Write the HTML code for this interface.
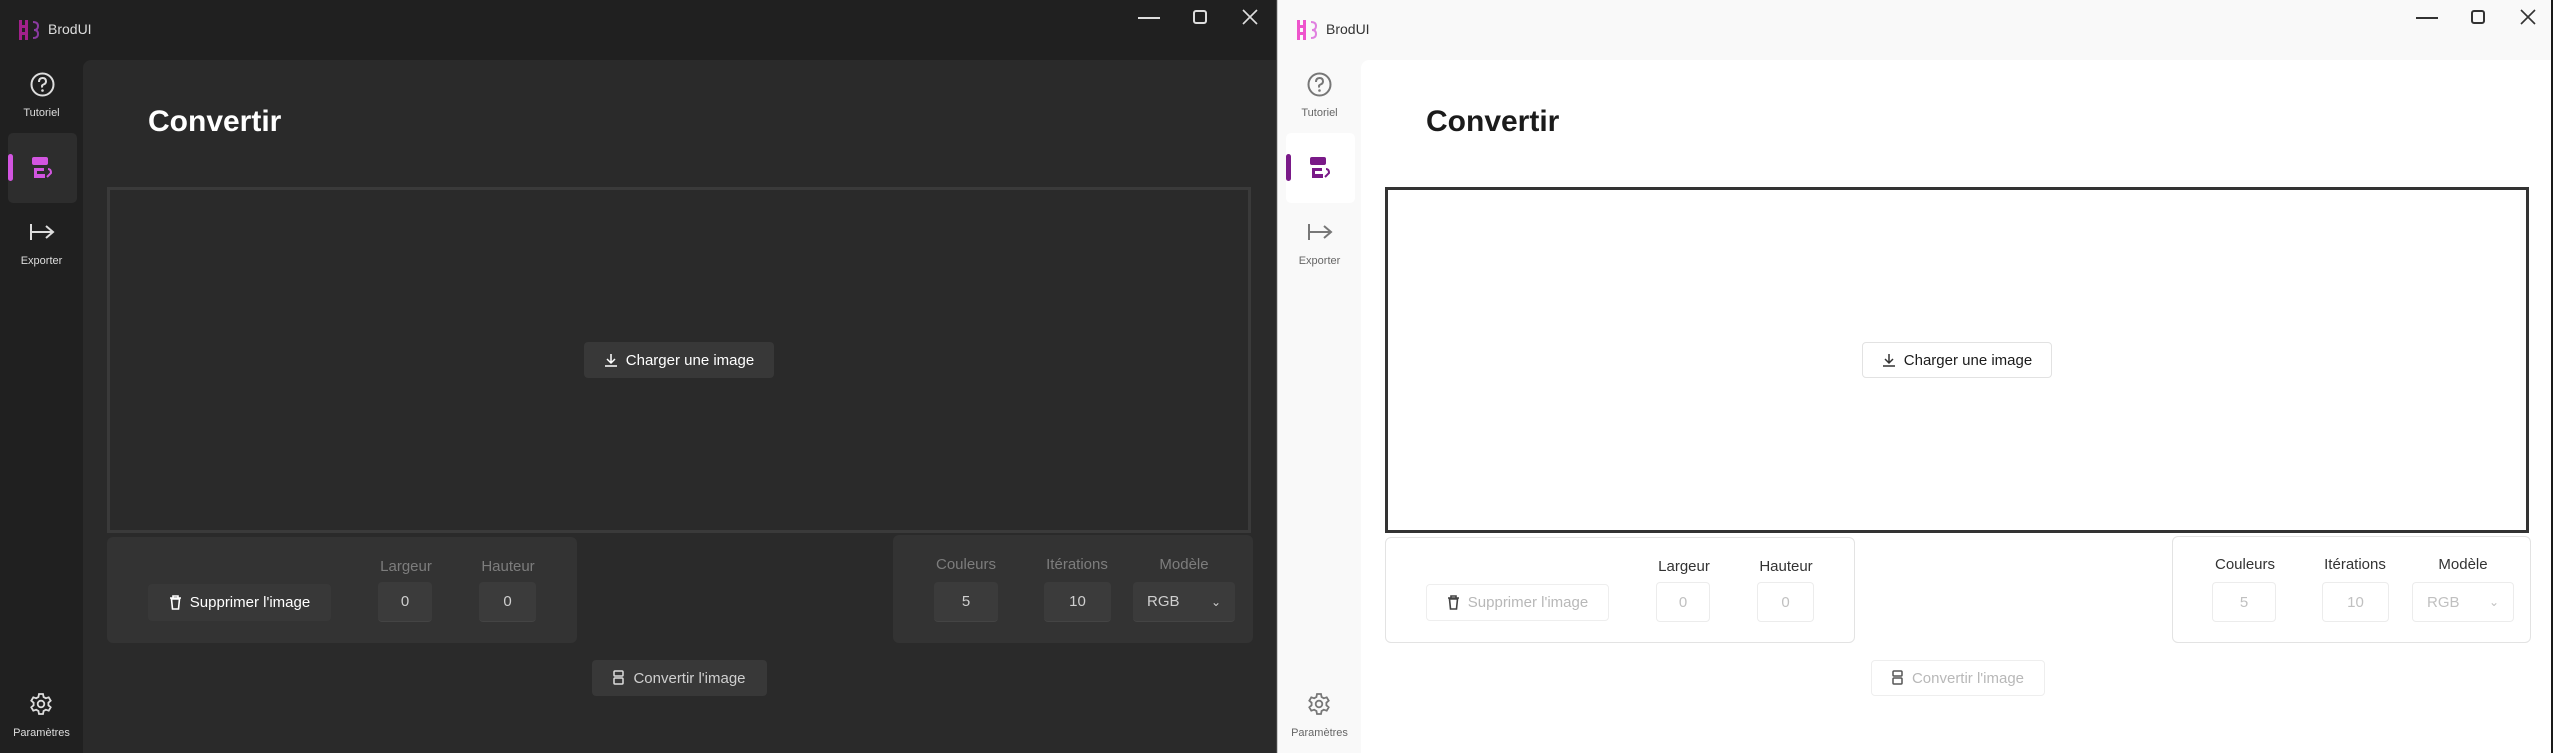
<!DOCTYPE html>
<html><head><meta charset="utf-8"><style>
*{box-sizing:border-box;margin:0;padding:0}
body{width:2553px;height:753px;position:relative;overflow:hidden;background:#1a1a1a;font-family:"Liberation Sans",sans-serif}
.win{position:absolute;top:0;height:753px;overflow:hidden}
.a{position:absolute;white-space:nowrap}
.d{background:#202020;color:#fff}
.l{background:#f9f9f9;color:#1b1b1b}
.content{left:83px;top:60px;right:0;bottom:0;border-top-left-radius:8px}
.d .content{background:#2a2a2a}
.l .content{background:#fff}
.title{left:48px;top:21px;font-size:14px}
.navlbl{width:83px;left:0;text-align:center;font-size:11px}
.h1{left:148px;top:105px;font-size:30px;font-weight:bold}
.dz{left:107px;top:187px;width:1144px;height:346px}
.d .dz{border:3px solid #3a3a3a}
.l .dz{border:3px solid #333}
.btn{border-radius:4px;font-size:15px;display:flex;align-items:center;justify-content:center;gap:8px}
.d .btn{background:#383838;color:#fff}
.l .btn{background:#fff;border:1px solid #e2e2e2;color:#1b1b1b}
.d .btn.dis{color:#cfcfcf}
.l .btn.dis{color:#b8b8b8;border-color:#eee}
.panel{border-radius:6px}
.d .panel{background:#333}
.l .panel{background:#fff;border:1px solid #e3e3e3}
.lbl{font-size:15px;text-align:center;width:120px}
.d .lbl{color:#7d7d7d}
.l .lbl{color:#333}
.inp{border-radius:4px;font-size:15px;display:flex;align-items:center;justify-content:center;height:40px;top:582px}
.d .inp{background:#3b3b3b;color:#cfcfcf;border-bottom:1px solid #444}
.l .inp{background:#fff;border:1px solid #ececec;color:#c0c0c0}
</style></head><body>

<!-- DARK WINDOW -->
<div class="win d" style="left:0;width:1277px;border-right:1px solid #444">
 <svg class="a" style="left:18px;top:19px" width="24" height="22" viewBox="0 0 24 22"><g fill="#a0208a"><rect x="1" y="1" width="3" height="20"/><rect x="7" y="1" width="3" height="20"/><rect x="1" y="6" width="9" height="3"/><rect x="1" y="13" width="9" height="3"/></g><path d="M15 3q5 0 5 4t-4 4q4 0 4 4t-5 4" stroke="#8a3aa0" stroke-width="2" fill="none"/></svg>
 <div class="a title" style="color:#ddd">BrodUI</div>
 <div class="a" style="left:1138px;width:22px;height:2px;top:17px;background:#ddd"></div>
 <div class="a" style="left:1193px;top:10px;width:14px;height:14px;border:2px solid #ddd;border-radius:3px"></div>
 <svg class="a" style="left:1242px;top:9px" width="16" height="16"><path d="M1 1L15 15M15 1L1 15" stroke="#ddd" stroke-width="1.6"/></svg>
 <svg class="a" style="left:30px;top:72px" width="25" height="25"><circle cx="12.5" cy="12.5" r="11" stroke="#ddd" stroke-width="2" fill="none"/><path d="M9 10q0-4 3.5-4t3.5 3.5q0 2-2.5 3t-1 3" stroke="#ddd" stroke-width="2" fill="none"/><circle cx="12.5" cy="18.5" r="1.3" fill="#ddd"/></svg>
 <div class="a navlbl" style="top:107px;color:#ddd">Tutoriel</div>
 <div class="a" style="left:8px;top:133px;width:69px;height:70px;background:#2d2d2d;border-radius:5px"></div>
 <div class="a" style="left:8px;top:154px;width:5px;height:27px;background:#d255e0;border-radius:3px"></div>
 <svg class="a" style="left:32px;top:157px" width="22" height="22"><rect x="0" y="0" width="16" height="8" rx="2" fill="#d255e0"/><path d="M2 11h10v3H5v3h8v4H2z" fill="#d255e0"/><path d="M16 12q3 0 3 4l-4 4" stroke="#d255e0" stroke-width="2" fill="none"/></svg>
 <svg class="a" style="left:29px;top:222px" width="26" height="20"><path d="M2 2v16M2 10h22M17 4l7 6-7 6" stroke="#ddd" stroke-width="2" fill="none"/></svg>
 <div class="a navlbl" style="top:255px;color:#ddd">Exporter</div>
 <svg class="a" style="left:29px;top:692px" width="24" height="24" viewBox="0 0 24 24"><path d="M10 2h4l.6 3 2.2 1.3 2.9-1 2 3.4-2.3 2v2.6l2.3 2-2 3.4-2.9-1-2.2 1.3-.6 3h-4l-.6-3-2.2-1.3-2.9 1-2-3.4 2.3-2v-2.6l-2.3-2 2-3.4 2.9 1L9.4 5z" stroke="#ddd" stroke-width="1.8" fill="none"/><circle cx="12" cy="12" r="3.3" stroke="#ddd" stroke-width="1.8" fill="none"/></svg>
 <div class="a navlbl" style="top:727px;color:#ddd">Paramètres</div>
 <div class="a content"></div>
 <div class="a h1">Convertir</div>
 <div class="a dz"></div>
 <div class="a btn" style="left:584px;top:342px;width:190px;height:36px">
  <svg width="14" height="14"><path d="M7 1v9M3 6l4 4 4-4M1 13h12" stroke="#fff" stroke-width="1.5" fill="none"/></svg>Charger une image</div>
 <div class="a panel" style="left:107px;top:537px;width:470px;height:106px"></div>
 <div class="a btn" style="left:148px;top:584px;width:183px;height:37px">
  <svg width="13" height="15"><path d="M1 3h11M4 3V1h5v2M2.5 4l1 10h6l1-10z" stroke="#fff" stroke-width="1.6" fill="none"/></svg>Supprimer l'image</div>
 <div class="a lbl" style="left:346px;top:558px">Largeur</div>
 <div class="a lbl" style="left:448px;top:558px">Hauteur</div>
 <div class="a inp" style="left:378px;width:54px">0</div>
 <div class="a inp" style="left:479px;width:57px">0</div>
 <div class="a panel" style="left:893px;top:535px;width:360px;height:108px"></div>
 <div class="a lbl" style="left:906px;top:556px">Couleurs</div>
 <div class="a lbl" style="left:1017px;top:556px">Itérations</div>
 <div class="a lbl" style="left:1124px;top:556px">Modèle</div>
 <div class="a inp" style="left:934px;width:64px">5</div>
 <div class="a inp" style="left:1044px;width:67px">10</div>
 <div class="a inp" style="left:1133px;width:102px;justify-content:space-between;padding:0 14px">RGB<span style="font-size:12px">&#8964;</span></div>
 <div class="a btn dis" style="left:592px;top:660px;width:175px;height:36px">
  <svg width="12" height="16"><rect x="1" y="1" width="9" height="5" rx="1" stroke="#ddd" stroke-width="1.5" fill="none"/><rect x="1" y="8" width="9" height="6" rx="1" stroke="#ddd" stroke-width="1.5" fill="none"/></svg>Convertir l'image</div>
</div>

<!-- LIGHT WINDOW -->
<div class="win l" style="left:1277px;width:1274px;border-left:1px solid #ccc">
 <svg class="a" style="left:18px;top:19px" width="24" height="22" viewBox="0 0 24 22"><g fill="#ee55cc"><rect x="1" y="1" width="3" height="20"/><rect x="7" y="1" width="3" height="20"/><rect x="1" y="6" width="9" height="3"/><rect x="1" y="13" width="9" height="3"/></g><path d="M15 3q5 0 5 4t-4 4q4 0 4 4t-5 4" stroke="#e080e0" stroke-width="2" fill="none"/></svg>
 <div class="a title" style="color:#333">BrodUI</div>
 <div class="a" style="left:1138px;width:22px;height:2px;top:17px;background:#333"></div>
 <div class="a" style="left:1193px;top:10px;width:14px;height:14px;border:2px solid #333;border-radius:3px"></div>
 <svg class="a" style="left:1242px;top:9px" width="16" height="16"><path d="M1 1L15 15M15 1L1 15" stroke="#333" stroke-width="1.6"/></svg>
 <svg class="a" style="left:29px;top:72px" width="25" height="25"><circle cx="12.5" cy="12.5" r="11" stroke="#777" stroke-width="2" fill="none"/><path d="M9 10q0-4 3.5-4t3.5 3.5q0 2-2.5 3t-1 3" stroke="#777" stroke-width="2" fill="none"/><circle cx="12.5" cy="18.5" r="1.3" fill="#777"/></svg>
 <div class="a navlbl" style="top:107px;color:#666">Tutoriel</div>
 <div class="a" style="left:8px;top:133px;width:69px;height:70px;background:#fff;border-radius:5px"></div>
 <div class="a" style="left:8px;top:154px;width:5px;height:27px;background:#7a1a88;border-radius:3px"></div>
 <svg class="a" style="left:32px;top:157px" width="22" height="22"><rect x="0" y="0" width="16" height="8" rx="2" fill="#7a1a88"/><path d="M2 11h10v3H5v3h8v4H2z" fill="#7a1a88"/><path d="M16 12q3 0 3 4l-4 4" stroke="#7a1a88" stroke-width="2" fill="none"/></svg>
 <svg class="a" style="left:29px;top:222px" width="26" height="20"><path d="M2 2v16M2 10h22M17 4l7 6-7 6" stroke="#777" stroke-width="2" fill="none"/></svg>
 <div class="a navlbl" style="top:255px;color:#666">Exporter</div>
 <svg class="a" style="left:29px;top:692px" width="24" height="24" viewBox="0 0 24 24"><path d="M10 2h4l.6 3 2.2 1.3 2.9-1 2 3.4-2.3 2v2.6l2.3 2-2 3.4-2.9-1-2.2 1.3-.6 3h-4l-.6-3-2.2-1.3-2.9 1-2-3.4 2.3-2v-2.6l-2.3-2 2-3.4 2.9 1L9.4 5z" stroke="#777" stroke-width="1.8" fill="none"/><circle cx="12" cy="12" r="3.3" stroke="#777" stroke-width="1.8" fill="none"/></svg>
 <div class="a navlbl" style="top:727px;color:#666">Paramètres</div>
 <div class="a content"></div>
 <div class="a h1" style="color:#1b1b1b">Convertir</div>
 <div class="a dz"></div>
 <div class="a btn" style="left:584px;top:342px;width:190px;height:36px">
  <svg width="14" height="14"><path d="M7 1v9M3 6l4 4 4-4M1 13h12" stroke="#333" stroke-width="1.5" fill="none"/></svg>Charger une image</div>
 <div class="a panel" style="left:107px;top:537px;width:470px;height:106px"></div>
 <div class="a btn dis" style="left:148px;top:584px;width:183px;height:37px">
  <svg width="13" height="15"><path d="M1 3h11M4 3V1h5v2M2.5 4l1 10h6l1-10z" stroke="#444" stroke-width="1.6" fill="none"/></svg>Supprimer l'image</div>
 <div class="a lbl" style="left:346px;top:558px">Largeur</div>
 <div class="a lbl" style="left:448px;top:558px">Hauteur</div>
 <div class="a inp" style="left:378px;width:54px">0</div>
 <div class="a inp" style="left:479px;width:57px">0</div>
 <div class="a panel" style="left:894px;top:536px;width:359px;height:107px"></div>
 <div class="a lbl" style="left:907px;top:556px">Couleurs</div>
 <div class="a lbl" style="left:1017px;top:556px">Itérations</div>
 <div class="a lbl" style="left:1125px;top:556px">Modèle</div>
 <div class="a inp" style="left:934px;width:64px">5</div>
 <div class="a inp" style="left:1044px;width:67px">10</div>
 <div class="a inp" style="left:1134px;width:102px;justify-content:space-between;padding:0 14px">RGB<span style="font-size:12px">&#8964;</span></div>
 <div class="a btn dis" style="left:593px;top:660px;width:174px;height:36px">
  <svg width="12" height="16"><rect x="1" y="1" width="9" height="5" rx="1" stroke="#555" stroke-width="1.5" fill="none"/><rect x="1" y="8" width="9" height="6" rx="1" stroke="#555" stroke-width="1.5" fill="none"/></svg>Convertir l'image</div>
</div>
</body></html>
